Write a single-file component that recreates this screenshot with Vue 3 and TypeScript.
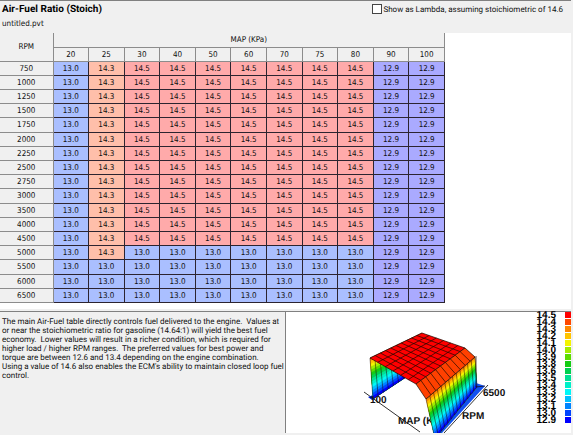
<script setup lang="ts">
import { ref } from 'vue'

type Point = [number, number]
type Quad = [Point, Point, Point, Point]

const lambda = ref(false)
const mapAxis = [20, 25, 30, 40, 50, 60, 70, 75, 80, 90, 100]
const rpmAxis = [750, 1000, 1250, 1500, 1750, 2000, 2250, 2500, 2750, 3000, 3500, 4000, 4500, 5000, 5500, 6000, 6500]

function ratio(rpm: number, map: number): number {
  if (map >= 90) return 12.9
  if (map === 20 || rpm > 5000) return 13
  if (map === 25) return 14.3
  return rpm === 5000 ? 13 : 14.5
}

const toneOf: Record<string, string> = { '12.9': 'violet', '13.0': 'blue', '14.3': 'peach', '14.5': 'pink' }

const rows = rpmAxis.map((rpm) => ({
  rpm,
  cells: mapAxis.map((map) => {
    const text = ratio(rpm, map).toFixed(1)
    return { map, text, tone: toneOf[text] }
  }),
}))

const scale = [
  '#ff0000', '#ff4800', '#ff8800', '#ffc400', '#f4f400', '#a4ec00', '#5cdc00', '#14cc14',
  '#00d050', '#00e094', '#00f0c8', '#00f8f8', '#00c0ff', '#0084ff', '#0044ff', '#0000ff',
]
const legend = scale.map((color, i) => ({ color, label: (14.5 - (1.6 * i) / 15).toFixed(1) }))

// Quads are listed as near-start, near-end, far-end, far-start; u runs along them and v across.
function at(q: Quad, u: number, v: number): Point {
  const mix = (k: 0 | 1) =>
    (1 - v) * ((1 - u) * q[0][k] + u * q[1][k]) + v * ((1 - u) * q[3][k] + u * q[2][k])
  return [mix(0), mix(1)]
}
const path = (pts: Point[]) => 'M' + pts.map((p) => p.map((n) => n.toFixed(1)).join(',')).join('L')

function mesh(q: Quad, across: number, down: number): string {
  const lines: string[] = []
  for (let i = 0; i <= across; i++) lines.push(path([at(q, i / across, 0), at(q, i / across, 1)]))
  for (let j = 0; j <= down; j++) lines.push(path([at(q, 0, j / down), at(q, 1, j / down)]))
  return lines.join('')
}
function bands(q: Quad) {
  return scale.slice(2).map((color, i, all) => {
    const a = i / all.length
    return { color, d: path([at(q, 0, a), at(q, 1, a), at(q, 1, 1), at(q, 0, 1)]) + 'Z' }
  })
}

const backWall: Quad = [[88, 46], [140, 21], [147, 50], [91, 87]]
const plateau: Quad = [[88, 46], [140, 21], [183, 36], [134, 72]]
const shoulder: Quad = [[134, 72], [183, 36], [193, 45], [144, 87]]
const frontWall: Quad = [[144, 87], [193, 45], [195, 75], [153, 127]]
</script>

<template>
  <main class="window">
    <section class="editor">
      <header class="head">
        <div>
          <h1>Air-Fuel Ratio (Stoich)</h1>
          <p class="file">untitled.pvt</p>
        </div>
        <label class="lambda">
          <input v-model="lambda" type="checkbox" />
          <span>Show as Lambda, assuming stoichiometric of 14.6</span>
        </label>
      </header>
      <div class="sheet">
        <table>
          <colgroup>
            <col class="rpm-col" />
            <col v-for="m in mapAxis" :key="m" />
          </colgroup>
          <thead>
            <tr>
              <th rowspan="2" scope="col">RPM</th>
              <th :colspan="mapAxis.length" scope="colgroup">MAP (KPa)</th>
            </tr>
            <tr>
              <th v-for="m in mapAxis" :key="m" scope="col">{{ m }}</th>
            </tr>
          </thead>
          <tbody>
            <tr v-for="row in rows" :key="row.rpm">
              <th scope="row">{{ row.rpm }}</th>
              <td v-for="cell in row.cells" :key="cell.map" :class="cell.tone">{{ cell.text }}</td>
            </tr>
          </tbody>
        </table>
      </div>
    </section>
    <section class="lower">
      <p class="about">The main Air-Fuel table directly controls fuel delivered to the engine.&nbsp; Values at<br />or near the stoichiometric ratio for gasoline (14.64:1) will yield the best fuel<br />economy.&nbsp; Lower values will result in a richer condition, which is required for<br />higher load / higher RPM ranges.&nbsp; The preferred values for best power and<br />torque are between 12.6 and 13.4 depending on the engine combination.<br />Using a value of 14.6 also enables the ECM's ability to maintain closed loop fuel<br />control.</p>
      <div class="plot">
        <svg class="surface" viewBox="4 0 240 121" width="240" height="121" role="img">
          <path class="axis" d="M82,80L138,120" />
          <path d="M86,85L91,83L93,87L90,88Z" fill="#0020d0" />
          <path v-for="b in bands(backWall)" :key="b.color" :d="b.d" :fill="b.color" />
          <path class="mesh wall" :d="mesh(backWall, 11, 1)" />
          <text x="88" y="91">100</text>
          <text x="116" y="112">MAP (K</text>
          <path d="M194,71L203,74L160,121L151,121Z" fill="#1050f0" />
          <path v-for="b in bands(frontWall)" :key="b.color" :d="b.d" :fill="b.color" />
          <path class="mesh wall" :d="mesh(frontWall, 13, 1)" />
          <path :d="path(plateau) + 'Z'" fill="#ff0000" />
          <path class="mesh" :d="mesh(plateau, 10, 6)" />
          <path :d="path(shoulder) + 'Z'" fill="#ff4000" />
          <path class="mesh" :d="mesh(shoulder, 10, 1)" />
          <path class="mesh" d="M194,44V75L203,74" />
          <path class="axis" d="M162,121L206,73" />
          <text x="180" y="107">RPM</text>
          <text x="201" y="84">6500</text>
        </svg>
        <ol class="legend">
          <li v-for="item in legend" :key="item.color">
            <span>{{ item.label }}</span>
            <i :style="{ background: item.color }"></i>
          </li>
        </ol>
      </div>
    </section>
  </main>
</template>

<style>
body {
  margin: 0;
  background: #f0f0f0;
}
</style>

<style scoped>
.window {
  box-sizing: border-box;
  min-height: 100vh;
  display: flex;
  flex-direction: column;
  padding: 0 2px 2px 0;
  background: #f0f0f0;
  color: #111;
  font: 8px/9px "DejaVu Sans Condensed", "DejaVu Sans", sans-serif;
  text-rendering: geometricPrecision;
}
.editor {
  border-top: 1px solid #808080;
  border-bottom: 1px solid #808080;
}
.head {
  display: flex;
  justify-content: space-between;
  height: 32px;
  padding: 0 8px 0 2px;
  box-sizing: border-box;
}
h1 {
  margin: 2px 0 0;
  color: #000;
  font: bold 10px/14px Roboto, sans-serif;
}
.file {
  margin: 2px 0 0;
}
.lambda {
  display: flex;
  align-items: center;
  gap: 1px;
  height: 16px;
  font-family: Roboto, sans-serif;
}
.lambda input {
  appearance: none;
  width: 10px;
  height: 10px;
  margin: 0;
  box-sizing: border-box;
  border: 1px solid #444;
  background: #fff;
}
.lambda input:checked {
  background: #444;
}
.sheet {
  padding: 0 0 6px;
  border-bottom: 2px solid #f0f0f0;
  background: #fff;
}
table {
  width: 445px;
  height: 270px;
  table-layout: fixed;
  border-collapse: collapse;
}
tr {
  height: 14px;
}
.rpm-col {
  width: 53px;
}
th,
td {
  padding: 0;
  text-align: center;
  font-weight: normal;
}
th {
  border: 1px solid #8c8c8c;
  background: #f0f0f0;
}
td {
  border: 1px solid #2c2430;
}
thead tr:first-child th {
  border-top: 0;
}
tbody th,
thead tr:first-child th:first-child {
  border-left: 0;
}
.violet {
  background: #aaaaff;
}
.blue {
  background: #aabfff;
}
.peach {
  background: #ffbfaa;
}
.pink {
  background: #ffaaaa;
}
.lower {
  flex: 1;
  display: grid;
  grid-template-columns: 1fr 1fr;
}
.about {
  min-width: 0;
  margin: 0;
  padding: 5px 2px;
  border-right: 1px solid #808080;
  white-space: nowrap;
  font-family: Roboto, sans-serif;
}
.plot {
  min-width: 0;
  display: flex;
  justify-content: space-between;
  background: #fff;
}
.surface text {
  fill: #111;
  font: bold 10px "Liberation Sans", Arial, sans-serif;
}
.mesh {
  fill: none;
  stroke: #1c0800;
  stroke-width: 1;
  stroke-opacity: 0.7;
}
.wall {
  stroke-opacity: 0.5;
}
.axis {
  fill: none;
  stroke: #333;
  stroke-width: 1;
}
.legend {
  margin: 0;
  padding: 0;
  list-style: none;
  color: #000;
  font: bold 10px/7px "Liberation Sans", Arial, sans-serif;
}
.legend li {
  display: flex;
  gap: 9px;
  height: 7px;
}
.legend i {
  width: 6px;
  height: 6px;
}
</style>
